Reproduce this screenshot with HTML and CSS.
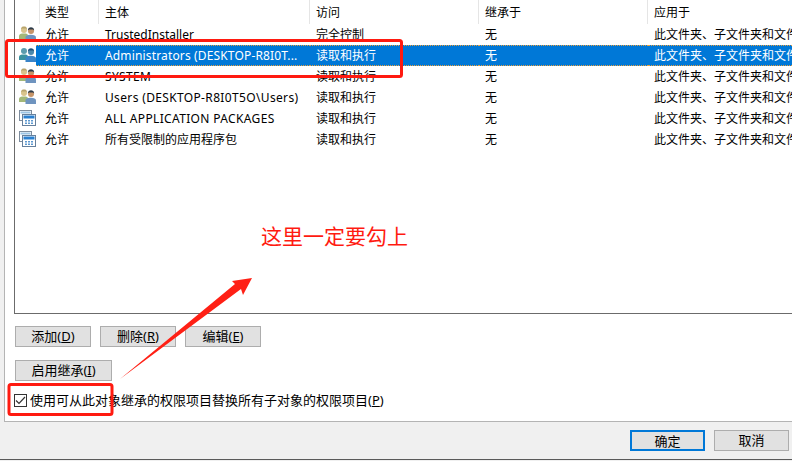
FILE: index.html
```html
<!DOCTYPE html>
<html lang="zh-CN">
<head>
    <meta charset="UTF-8">
    <meta name="viewport" content="width=device-width, initial-scale=1.0">
    <title>高级安全设置</title>
    <link rel="stylesheet" href="styles.css">
</head>
<body>
    <svg class="defs" width="0" height="0">
        <symbol id="icon-users" viewBox="0 0 17 16">
            <circle cx="5" cy="4" r="3" fill="#d9c48c"/>
            <path d="M2 3.500C2 1 3.500 .5 5 .5S8 1 8 3.500L7 2.500H3Z" fill="#b8a46c"/>
            <path d="M0 13V10C0 8 2 7.500 5 7.500S9 8 9 10V13Z" fill="#a3b878"/>
            <circle cx="12" cy="5" r="3" fill="#c69468"/>
            <path d="M8.800 4.500C8.800 2 10.500 1.200 12 1.200S15.200 2 15.200 4.500L14 3.500H10Z" fill="#2c3a48"/>
            <path d="M6.500 15V11.500C6.500 9.500 9 8.700 12 8.700S17 9.500 17 11.500V15Z" fill="#6f94bf"/>
        </symbol>
        <symbol id="icon-users-sel" viewBox="0 0 17 16">
            <circle cx="5" cy="4" r="3" fill="#5a9cae"/>
            <path d="M0 13V10C0 8 2 7.500 5 7.500S9 8 9 10V13Z" fill="#3a92a0"/>
            <circle cx="12" cy="5" r="3" fill="#4a88ac"/>
            <path d="M8.800 4.500C8.800 2 10.500 1.200 12 1.200S15.200 2 15.200 4.500L14 3.500H10Z" fill="#1d4f78"/>
            <path d="M6.500 15V11.500C6.500 9.500 9 8.700 12 8.700S17 9.500 17 11.500V15Z" fill="#3a84c8"/>
        </symbol>
        <symbol id="icon-package" viewBox="0 0 17 16">
            <rect x=".5" y=".5" width="12" height="10" fill="#fff" stroke="#7d8c9c"/>
            <rect x="1.500" y="1.500" width="10" height="2" fill="#9cc4e4"/>
            <rect x="3.500" y="4.500" width="13" height="11" fill="#fff" stroke="#66809c"/>
            <rect x="4.500" y="5.500" width="11" height="3" fill="#2a80d0"/>
            <path d="M6 10h2v1.500H6zM9 10h2v1.500H9zM12 10h2v1.500h-2zM6 12.500h2V14H6zM9 12.500h2V14H9zM12 12.500h2V14h-2z" fill="#5c98d0"/>
        </symbol>
    </svg>

    <section class="panel">
        <div class="list">
            <div class="list-head">
                <div class="head-gap"></div>
                <div class="head-cell type">类型</div>
                <div class="head-cell">主体</div>
                <div class="head-cell">访问</div>
                <div class="head-cell">继承于</div>
                <div class="head-cell">应用于</div>
            </div>
            <div class="row">
                <svg class="row-icon"><use href="#icon-users"/></svg>
                <span class="cell">允许</span>
                <span class="cell">TrustedInstaller</span>
                <span class="cell">完全控制</span>
                <span class="cell">无</span>
                <span class="cell">此文件夹、子文件夹和文件</span>
            </div>
            <div class="row selected">
                <svg class="row-icon"><use href="#icon-users-sel"/></svg>
                <span class="cell">允许</span>
                <span class="cell name-mid">Administrators (DESKTOP-R8I0T...</span>
                <span class="cell">读取和执行</span>
                <span class="cell">无</span>
                <span class="cell">此文件夹、子文件夹和文件</span>
            </div>
            <div class="row">
                <svg class="row-icon"><use href="#icon-users"/></svg>
                <span class="cell">允许</span>
                <span class="cell name-wide">SYSTEM</span>
                <span class="cell">读取和执行</span>
                <span class="cell">无</span>
                <span class="cell">此文件夹、子文件夹和文件</span>
            </div>
            <div class="row">
                <svg class="row-icon"><use href="#icon-users"/></svg>
                <span class="cell">允许</span>
                <span class="cell name-wide">Users (DESKTOP-R8I0T5O\Users)</span>
                <span class="cell">读取和执行</span>
                <span class="cell">无</span>
                <span class="cell">此文件夹、子文件夹和文件</span>
            </div>
            <div class="row">
                <svg class="row-icon"><use href="#icon-package"/></svg>
                <span class="cell">允许</span>
                <span class="cell name-wide">ALL APPLICATION PACKAGES</span>
                <span class="cell">读取和执行</span>
                <span class="cell">无</span>
                <span class="cell">此文件夹、子文件夹和文件</span>
            </div>
            <div class="row">
                <svg class="row-icon"><use href="#icon-package"/></svg>
                <span class="cell">允许</span>
                <span class="cell">所有受限制的应用程序包</span>
                <span class="cell">读取和执行</span>
                <span class="cell">无</span>
                <span class="cell">此文件夹、子文件夹和文件</span>
            </div>
        </div>

        <div class="actions">
            <button class="btn">添加(<u>D</u>)</button>
            <button class="btn">删除(<u>R</u>)</button>
            <button class="btn">编辑(<u>E</u>)</button>
        </div>
        <button class="btn btn-wide">启用继承(<u>I</u>)</button>
        <label class="check">
            <span class="check-box">
                <svg width="11" height="11" viewBox="0 0 11 11"><path d="M1 5.500L4 8.500L10 2" fill="none" stroke="#333" stroke-width="1.200"/></svg>
            </span>
            <span class="check-text">使用可从此对象继承的权限项目替换所有子对象的权限项目(<u>P</u>)</span>
        </label>
    </section>

    <footer class="footer">
        <button class="btn btn-default">确定</button>
        <button class="btn">取消</button>
    </footer>

    <!-- red annotations drawn over the dialog -->
    <svg class="marks" width="792" height="461" viewBox="0 0 792 461">
        <rect x="6.500" y="40.500" width="395" height="36" rx="2" fill="none" stroke="#ff1a10" stroke-width="3"/>
        <rect x="9" y="384.500" width="103" height="30" rx="2" fill="none" stroke="#ff1a10" stroke-width="3"/>
        <polygon points="120,379 235,284 232,281 252,278 243,295 241,289" fill="#ff2015"/>
    </svg>
    <div class="note">这里一定要勾上</div>
</body>
</html>
```

FILE: styles.css
```css
html, body {
    margin: 0;
    padding: 0;
    height: 100%;
    overflow: hidden;
}
body {
    position: relative;
    background-color: #f0f0f0;
    color: #000;
    font-family: "Noto Sans", "Noto Sans CJK SC", sans-serif;
    font-size: 12px;
}
.defs {
    position: absolute;
}
.panel {
    box-sizing: border-box;
    width: 800px;
    height: 422px;
    margin-left: 4px;
    padding-left: 9px;
    background-color: #fff;
    border-left: 1px solid #b4b4b4;
    border-bottom: 1px solid #b4b4b4;
}
.list {
    box-sizing: border-box;
    height: 314px;
    border-left: 1px solid #6b6b6b;
    border-bottom: 1px solid #6b6b6b;
}
.list-head {
    display: grid;
    grid-template-columns: 24px 59px 211px 169px 169px 1fr;
    height: 24px;
}
.head-cell {
    box-sizing: border-box;
    height: 24px;
    padding-left: 6px;
    line-height: 25px;
    border-left: 1px solid #e5e5e5;
    white-space: nowrap;
}
.head-cell.type {
    padding-left: 5px;
}
.row {
    display: grid;
    grid-template-columns: 21px 63px 211px 169px 169px 1fr;
    height: 21px;
    line-height: 22px;
}
.row-icon {
    width: 17px;
    height: 16px;
    margin: 2px 0 0 4px;
}
.cell {
    box-sizing: border-box;
    padding-left: 6px;
    white-space: nowrap;
    overflow: hidden;
}
.cell:first-of-type {
    padding-left: 9px;
}
.name-mid {
    letter-spacing: .15px;
}
.name-wide {
    letter-spacing: .35px;
}
.row.selected .cell {
    background-color: #0078d7;
    color: #fff;
    border-top: 1px dotted #e8a040;
    border-bottom: 1px dotted #e8a040;
    line-height: 20px;
}
.actions {
    display: flex;
    gap: 9px;
    margin: 12px 0 13px 1px;
}
.btn {
    box-sizing: border-box;
    width: 76px;
    height: 21px;
    padding: 0 0 2px;
    background-color: #e1e1e1;
    border: 1px solid #adadad;
    color: #000;
    font-family: inherit;
    font-size: 13px;
    line-height: 18px;
}
.btn-wide {
    display: block;
    width: 97px;
    margin-left: 1px;
}
.btn-default {
    border: 2px solid #0078d7;
}
.check {
    display: flex;
    align-items: center;
    gap: 3px;
    height: 13px;
    margin-top: 13px;
    font-size: 13px;
    white-space: nowrap;
}
.check-text {
    padding-bottom: 2px;
}
.check-box {
    box-sizing: border-box;
    display: flex;
    align-items: center;
    justify-content: center;
    width: 13px;
    height: 13px;
    border: 1px solid #333;
    background-color: #fff;
}
.footer {
    box-sizing: border-box;
    display: flex;
    justify-content: flex-end;
    gap: 9px;
    height: 38px;
    padding: 8px 3px 0 0;
    border-bottom: 1px solid #5a5a5a;
}
.footer .btn {
    width: 75px;
}
.marks {
    position: absolute;
    left: 0;
    top: 0;
    pointer-events: none;
}
.note {
    position: absolute;
    left: 261px;
    top: 221px;
    color: #ff1a10;
    font-size: 21px;
    line-height: 30px;
    white-space: nowrap;
}
```
